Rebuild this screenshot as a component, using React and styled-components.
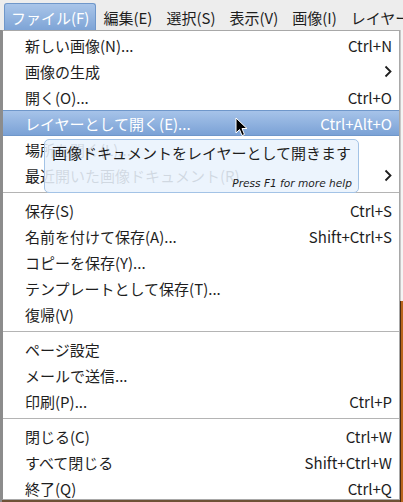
import React from 'react'
import styled, { createGlobalStyle } from 'styled-components'

const GlobalStyle = createGlobalStyle`
  html, body {
    margin: 0;
    padding: 0;
    background: #6e5236;
  }
  body {
    font-family: "Noto Sans CJK JP", "Noto Sans", sans-serif;
    font-size: 15px;
    color: #1e1e1e;
  }
`;

const Page = styled.div`
  width: 403px;
  height: 502px;
  overflow: hidden;
  display: flex;
  flex-direction: column;
  position: relative;
`;

const MenuBar = styled.div`
  height: 30px;
  display: flex;
  align-items: flex-end;
  padding-left: 4px;
  background: #ededed;
  flex-shrink: 0;
  overflow: hidden;
`;

const BarItem = styled.div`
  height: 27px;
  box-sizing: border-box;
  padding: 0 6px;
  display: flex;
  align-items: center;
  white-space: nowrap;
  border: 1px solid transparent;
  border-bottom: none;
  border-radius: 3px 3px 0 0;
  flex-shrink: 0;
  color: ${p => (p.$active ? '#fff' : '#1e1e1e')};
  background: ${p => (p.$active ? 'linear-gradient(#a9c5e9, #7ea4d6)' : 'transparent')};
  border-color: ${p => (p.$active ? '#6f97ca' : 'transparent')};
`;

const Body = styled.div`
  display: flex;
  flex: 1;
  position: relative;
`;

const LeftGutter = styled.div`
  width: 2px;
  background: #8c8c8c;
`;

const Menu = styled.div`
  width: 398px;
  height: 470px;
  box-sizing: border-box;
  background: #fff;
  border: 1px solid #a8a8a8;
  border-left-color: #8c8c8c;
  padding: 1px 0;
  display: flex;
  flex-direction: column;
`;

const RightStrip = styled.div`
  flex: 1;
  display: flex;
  flex-direction: column;
`;

const StripTop = styled.div`
  height: 271px;
  background: #f4f4f4;
  border-left: 1px solid #c8c8c8;
`;

const StripBottom = styled.div`
  flex: 1;
  background: linear-gradient(90deg, #4a2a10 0 1px, #b8651c 1px);
`;

const Row = styled.div`
  height: 26px;
  flex-shrink: 0;
  box-sizing: border-box;
  display: flex;
  align-items: center;
  justify-content: space-between;
  padding: 0 7px 0 22px;
  white-space: nowrap;
  color: ${p => (p.$active ? '#fff' : '#1e1e1e')};
  background: ${p => (p.$active ? 'linear-gradient(#a6c3e9, #7ba2d6)' : 'transparent')};
  border: 1px solid ${p => (p.$active ? '#6f97ca' : 'transparent')};
  border-width: 1px 0;
`;

const Shortcut = styled.span`
  color: inherit;
`;

const Separator = styled.div`
  height: 9px;
  flex-shrink: 0;
  display: flex;
  align-items: center;
  &::after {
    content: '';
    flex: 1;
    height: 1px;
    background: #b4b4b4;
  }
`;

const Tooltip = styled.div`
  position: absolute;
  left: 44px;
  top: 139px;
  width: 315px;
  height: 54px;
  box-sizing: border-box;
  padding: 2px 6px 0 7px;
  border: 1px solid #a3c3e6;
  border-radius: 5px;
  background: rgba(233, 243, 253, 0.88);
  display: flex;
  flex-direction: column;
  justify-content: space-between;
`;

const TipTitle = styled.div`
  font-size: 15px;
  white-space: nowrap;
  color: #1e1e1e;
`;

const TipHelp = styled.div`
  align-self: flex-end;
  font-family: "DejaVu Sans", sans-serif;
  font-style: italic;
  font-size: 10.6px;
  color: #1e1e1e;
  padding-bottom: 3px;
`;

const Cursor = styled.svg`
  position: absolute;
  left: 235px;
  top: 117px;
`;

const Chevron = () => (
  <svg width="8" height="13" viewBox="0 0 8 13">
    <polyline points="1.5,1.5 6.5,6.5 1.5,11.5" fill="none" stroke="#1e1e1e" strokeWidth="1.8" />
  </svg>
);

const groups = [
  [
    ['新しい画像(N)...', 'Ctrl+N'],
    ['画像の生成', 'sub'],
    ['開く(O)...', 'Ctrl+O'],
    ['レイヤーとして開く(E)...', 'Ctrl+Alt+O', true],
    ['場所を開く(L)...', ''],
    ['最近開いた画像ドキュメント(R)', 'sub'],
  ],
  [
    ['保存(S)', 'Ctrl+S'],
    ['名前を付けて保存(A)...', 'Shift+Ctrl+S'],
    ['コピーを保存(Y)...', ''],
    ['テンプレートとして保存(T)...', ''],
    ['復帰(V)', ''],
  ],
  [
    ['ページ設定', ''],
    ['メールで送信...', ''],
    ['印刷(P)...', 'Ctrl+P'],
  ],
  [
    ['閉じる(C)', 'Ctrl+W'],
    ['すべて閉じる', 'Shift+Ctrl+W'],
    ['終了(Q)', 'Ctrl+Q'],
  ],
];

const barItems = ['ファイル(F)', '編集(E)', '選択(S)', '表示(V)', '画像(I)', 'レイヤー(L)'];

export default function App() {
  return (
    <>
      <GlobalStyle />
      <Page>
        <MenuBar>
          {barItems.map((b, i) => (
            <BarItem key={b} $active={i === 0}>{b}</BarItem>
          ))}
        </MenuBar>
        <Body>
          <LeftGutter />
          <Menu>
            {groups.map((g, gi) => (
              <React.Fragment key={gi}>
                {gi > 0 && <Separator />}
                {g.map(([label, sc, active]) => (
                  <Row key={label} $active={active}>
                    <span>{label}</span>
                    {sc === 'sub' ? <Chevron /> : <Shortcut>{sc}</Shortcut>}
                  </Row>
                ))}
              </React.Fragment>
            ))}
          </Menu>
          <RightStrip>
            <StripTop />
            <StripBottom />
          </RightStrip>
        </Body>
        <Tooltip>
          <TipTitle>画像ドキュメントをレイヤーとして開きます</TipTitle>
          <TipHelp>Press F1 for more help</TipHelp>
        </Tooltip>
        <Cursor width="13" height="20" viewBox="0 0 13 20">
          <path d="M1 1 L1 16 L4.5 12.5 L7 18.5 L9.5 17.5 L7 11.5 L12 11.5 Z" fill="#000" stroke="#fff" strokeWidth="1" strokeLinejoin="round" />
        </Cursor>
      </Page>
    </>
  )
}
